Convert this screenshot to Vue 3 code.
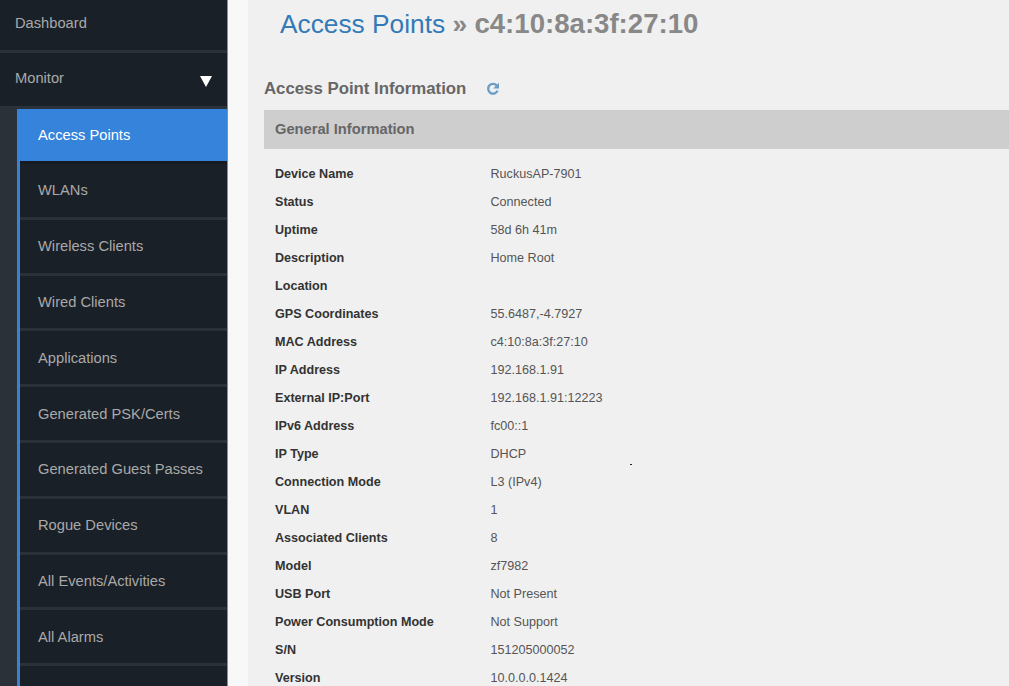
<script setup>
const subItems = ['WLANs','Wireless Clients','Wired Clients','Applications','Generated PSK/Certs','Generated Guest Passes','Rogue Devices','All Events/Activities','All Alarms','']
const rows = [
['Device Name','RuckusAP-7901'],['Status','Connected'],['Uptime','58d 6h 41m'],['Description','Home Root'],['Location',''],['GPS Coordinates','55.6487,-4.7927'],['MAC Address','c4:10:8a:3f:27:10'],['IP Address','192.168.1.91'],['External IP:Port','192.168.1.91:12223'],['IPv6 Address','fc00::1'],['IP Type','DHCP'],['Connection Mode','L3 (IPv4)'],['VLAN','1'],['Associated Clients','8'],['Model','zf7982'],['USB Port','Not Present'],['Power Consumption Mode','Not Support'],['S/N','151205000052'],['Version','10.0.0.0.1424']]
</script>

<template>
  <div class="page">
    <aside class="side">
      <div class="top dash">Dashboard</div>
      <div class="top mon"><span>Monitor</span><i class="tri"></i></div>
      <div class="subwrap">
        <div class="sublist">
          <div class="sub active">Access Points</div>
          <div v-for="s in subItems" :key="s" class="sub">{{ s }}</div>
        </div>
      </div>
    </aside>
    <div class="gutter"></div>
    <main class="main">
      <h1 class="title"><span class="crumb">Access Points</span> <span class="sep">»</span> <span class="mac">c4:10:8a:3f:27:10</span></h1>
      <h2 class="sect"><span>Access Point Information</span>
        <svg class="refresh" width="14" height="14" viewBox="0 0 14 14" fill="none">
          <path d="M11.6 8.6A4.9 4.9 0 1 1 10.7 3.4" stroke="#6a9cc4" stroke-width="2.3"/>
          <path d="M13 .8V6.6H7.2Z" fill="#6a9cc4"/>
        </svg>
      </h2>
      <div class="band">General Information</div>
      <div class="table">
        <div v-for="r in rows" :key="r[0]" class="row">
          <b>{{ r[0] }}</b><span>{{ r[1] }}</span>
        </div>
      </div>
      <i class="dot"></i>
    </main>
  </div>
</template>

<style>
html, body { margin: 0; overflow: hidden; }
</style>
<style scoped>
.page { width: 1009px; height: 686px; display: flex; overflow: hidden; background: #f0f0f0; font-family: "Liberation Sans", Arial, sans-serif; }
.side { width: 227px; flex: none; background: #2a3138; overflow: hidden; }
.top { background: #1a2027; color: #a9a9a9; font-size: 14.7px; padding-left: 15px; box-sizing: border-box; display: flex; align-items: center; border-bottom: 3px solid #2a3138; }
.dash { height: 53px; padding-bottom: 5px; }
.mon { height: 56px; justify-content: space-between; padding-right: 15px; padding-bottom: 3px; }
.tri { width: 0; height: 0; border-left: 6.5px solid transparent; border-right: 6.5px solid transparent; border-top: 11px solid #fff; margin-top: 7px; }
.subwrap { padding-left: 17px; }
.sublist { border-left: 3px solid #3a80d6; }
.sub { height: 55.8px; box-sizing: border-box; background: #1a2027; color: #a9a9a9; font-size: 14.7px; padding: 0 0 0 18px; display: flex; align-items: center; border-bottom: 3px solid #2a3138; }
.sub.active { background: #3683dc; color: #fff; height: 52px; margin-left: -3px; padding-left: 21px; border-bottom: 0; }
.sub.active + .sub { height: 58.8px; border-top: 3px solid #161b21; }
.gutter { width: 21px; flex: none; background: #f8f8f8; border-left: 1px solid #8a8d90; box-sizing: border-box; }
.main { flex: 1; min-width: 0; position: relative; padding-left: 16px; }
.title { margin: 0; padding: 9px 0 0 16px; font-size: 26.3px; line-height: 30px; font-weight: normal; color: #888; white-space: nowrap; }
.crumb { color: #337ab7; }
.sep { font-weight: bold; }
.mac { font-weight: bold; font-size: 27.6px; }
.sect { margin: 0; height: 20px; padding-top: 40px; font-size: 16.8px; line-height: 20px; font-weight: bold; color: #666; display: flex; align-items: center; }
.refresh { margin-left: 20px; }
.band { margin-top: 11px; height: 39px; background: #cecece; color: #666; font-size: 14.7px; font-weight: bold; line-height: 38px; padding-left: 11px; }
.table { padding: 11px 0 0 11px; }
.row { height: 28px; display: flex; align-items: center; font-size: 12.6px; color: #555; }
.row b { width: 215.5px; flex: none; color: #333; }
.dot { position: absolute; left: 382px; top: 464px; width: 2px; height: 1px; background: #222; }
</style>
